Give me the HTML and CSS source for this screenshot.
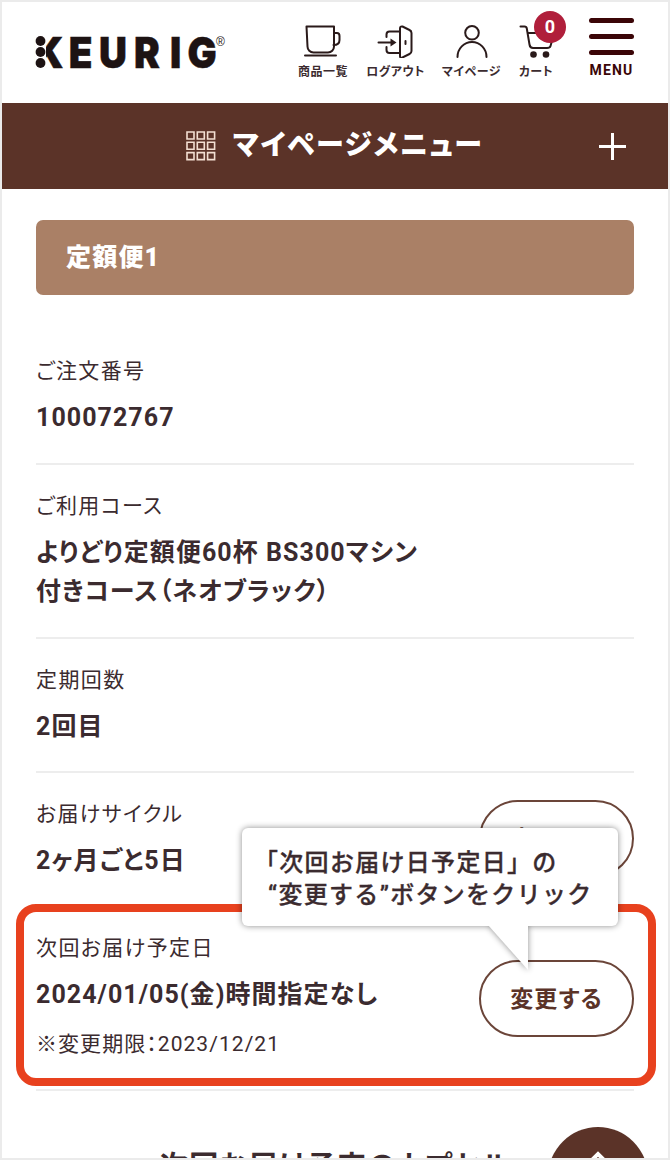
FILE: index.html
```html
<!DOCTYPE html>
<html lang="ja">
<head>
    <meta charset="UTF-8">
    <meta name="viewport" content="width=device-width, initial-scale=1.0">
    <title>KEURIG マイページ</title>
    <link rel="stylesheet" href="styles.css">
</head>
<body>
<div class="page">
    <header class="header">
        <svg class="logo" width="194" height="40" viewBox="0 0 194 40">
            <text class="logo-text" transform="scale(0.9 1)" x="-1 37.500 71 110 150 169.500" y="34">KEURIG</text>
            <rect x="0" y="0" width="11" height="36" fill="#fff"/>
            <circle cx="5.500" cy="7" r="4.900"/>
            <circle cx="5.500" cy="18" r="4.900"/>
            <circle cx="5.500" cy="29" r="4.900"/>
            <text class="logo-reg" x="181" y="11.500">®</text>
        </svg>
        <nav class="header-nav">
            <a class="nav-products">
                <svg width="38" height="34" viewBox="0 0 38 34">
                    <path d="M2.500 2.500H30v20a6 6 0 0 1-6 6H9.500a6 6 0 0 1-6-6z"/>
                    <path d="M30 9h3q2.500 0 2.500 3v4q0 5-6 5M1 31.500h31"/>
                </svg>
                <span>商品一覧</span>
            </a>
            <a class="nav-logout">
                <svg width="38" height="34" viewBox="0 0 38 34">
                    <path d="M23 7.500H12.500a3 3 0 0 0-3 3v2.500M9.500 23v3a3 3 0 0 0 3 3H23"/>
                    <path d="M23 4.500q0-2.500 2.500-2l7 3.500q2 1 2 3v18q0 2-2 3l-7 3.500q-2.500 1-2.500-1.500zM28.500 17v3"/>
                    <path d="M1.500 18.500h14"/>
                    <path class="fill" d="M13.500 14.500l6 4-6 4z"/>
                </svg>
                <span>ログアウト</span>
            </a>
            <a class="nav-mypage">
                <svg width="38" height="34" viewBox="0 0 38 34">
                    <circle cx="19" cy="8.800" r="6.800"/>
                    <path d="M4.500 33a14.500 15 0 0 1 29 0"/>
                </svg>
                <span>マイページ</span>
            </a>
            <a class="nav-cart">
                <svg width="38" height="34" viewBox="0 0 38 34">
                    <path d="M3.500 2.500h4q2 0 2.300 2l2.700 16q.5 3.500 3.500 3.500H30q3 0 3.500-2l2-7M10.500 9H35"/>
                    <circle class="fill" cx="16.500" cy="30.500" r="3.300"/>
                    <circle class="fill" cx="29" cy="30.500" r="3.300"/>
                </svg>
                <b class="badge">0</b>
                <span>カート</span>
            </a>
        </nav>
        <button class="menu-btn">
            <i></i><i></i><i></i>
            <span>MENU</span>
        </button>
    </header>

    <div class="mypage-menu">
        <svg class="grid-icon" width="30" height="30" viewBox="0 0 30 30">
            <path d="M1 1h7v7H1zM11.300 1h7v7h-7zM21.600 1h7v7h-7zM1 11.300h7v7H1zM11.300 11.300h7v7h-7zM21.600 11.300h7v7h-7zM1 21.600h7v7H1zM11.300 21.600h7v7h-7zM21.600 21.600h7v7h-7z"/>
        </svg>
        <span class="mypage-menu-title">マイページメニュー</span>
        <span class="plus"></span>
    </div>

    <main class="main">
        <h2 class="plan-title">定額便1</h2>
        <dl class="row row-number">
            <dt>ご注文番号</dt>
            <dd>100072767</dd>
        </dl>
        <dl class="row row-course">
            <dt>ご利用コース</dt>
            <dd>よりどり定額便60杯 BS300マシン<br>付きコース（ネオブラック）</dd>
        </dl>
        <dl class="row">
            <dt>定期回数</dt>
            <dd>2回目</dd>
        </dl>
        <div class="row row-action">
            <dl>
                <dt>お届けサイクル</dt>
                <dd>2ヶ月ごと5日</dd>
            </dl>
            <button class="change-btn">変更する</button>
        </div>
        <div class="row row-action row-next">
            <dl>
                <dt>次回お届け予定日</dt>
                <dd>2024/01/05(金)時間指定なし</dd>
                <dd class="note">※変更期限：2023/12/21</dd>
            </dl>
            <button class="change-btn">変更する</button>
            <div class="highlight"></div>
            <div class="callout">
                <p>「次回お届け日予定日」の<br><span class="callout-line2">“変更する”ボタンをクリック</span></p>
                <svg class="callout-tail" width="42" height="46" viewBox="0 0 42 46"><path d="M0 0h40v45z"/></svg>
            </div>
        </div>
        <h3 class="capsule-title">次回お届け予定のカプセル</h3>
    </main>

    <a class="page-top">
        <svg width="30" height="18" viewBox="0 0 30 18"><path d="M2 16L15 3l13 13"/></svg>
    </a>
</div>
</body>
</html>
```
FILE: styles.css
```css
* {
    box-sizing: border-box;
}
body {
    margin: 0;
    font-family: Roboto, "Noto Sans CJK JP", sans-serif;
    font-feature-settings: "palt";
    color: #3b2b2f;
    background: #fff;
}
.page {
    position: relative;
    width: 670px;
    height: 1160px;
    border: 2px solid #ebebeb;
    overflow: hidden;
}
h2, h3, p, dl, dd {
    margin: 0;
}
button {
    font: inherit;
    font-feature-settings: inherit;
    color: inherit;
    background: none;
    border: 0;
    padding: 0;
}

/* header */
.header {
    display: flex;
    align-items: flex-start;
    height: 101px;
    padding-left: 33px;
}
.logo {
    margin-top: 32px;
    fill: #1d1313;
    flex: none;
    overflow: visible;
}
.logo-text {
    font-family: Inter, sans-serif;
    font-weight: 900;
    font-size: 43px;
    stroke: #1d1313;
    stroke-width: 0.5;
}
.logo-reg {
    font-family: "Liberation Sans", sans-serif;
    font-size: 12px;
}
.header-nav {
    display: flex;
    margin-left: 66px;
    padding-top: 22px;
}
.header-nav a {
    position: relative;
    display: flex;
    flex-direction: column;
    align-items: center;
}
.header-nav svg {
    fill: none;
    stroke: #2a1a1a;
    stroke-width: 2;
    stroke-linecap: round;
    stroke-linejoin: round;
}
.header-nav .fill {
    fill: #2a1a1a;
    stroke: none;
}
.header-nav span {
    margin-top: 5px;
    font-size: 12px;
    line-height: 18px;
    font-weight: 700;
    letter-spacing: 0.5px;
    white-space: nowrap;
}
.nav-products {
    width: 56px;
}
.nav-logout {
    width: 89px;
}
.nav-mypage {
    width: 63px;
}
.nav-cart {
    width: 66px;
}
.badge {
    position: absolute;
    left: 31px;
    top: -13px;
    width: 32px;
    height: 32px;
    border-radius: 50%;
    background: #b01f3b;
    color: #fff;
    font-size: 18px;
    line-height: 31px;
    text-align: center;
}
.menu-btn {
    display: flex;
    flex-direction: column;
    align-items: center;
    width: 45px;
    margin: 16px 0 0 20px;
}
.menu-btn i {
    width: 45px;
    height: 5px;
    margin-bottom: 11px;
    border-radius: 3px;
    background: #3b0507;
}
.menu-btn span {
    margin-top: -5px;
    color: #3b0507;
    font-size: 14px;
    line-height: 18px;
    font-weight: 700;
    letter-spacing: 1.2px;
}

/* mypage menu bar */
.mypage-menu {
    display: flex;
    align-items: center;
    height: 86px;
    padding: 0 42px 0 184px;
    background: #5b3328;
    color: #fff;
}
.grid-icon {
    fill: none;
    stroke: #f3dfd2;
    stroke-width: 1.6;
}
.mypage-menu-title {
    margin: -6px auto 0 17px;
    font-size: 28px;
    font-weight: 900;
    letter-spacing: 1.6px;
}
.plus {
    width: 27px;
    height: 27px;
    background:
        linear-gradient(#fff, #fff) center / 27px 3px no-repeat,
        linear-gradient(#fff, #fff) center / 3px 27px no-repeat;
}

/* order detail */
.main {
    padding: 31px 34px 0;
}
.plan-title {
    height: 75px;
    margin-bottom: 41px;
    padding-left: 30px;
    border-radius: 7px;
    background: #aa8066;
    color: #fff;
    font-size: 25px;
    font-weight: 900;
    line-height: 75px;
    letter-spacing: 1.2px;
}
.row {
    position: relative;
    height: 134px;
    padding-top: 27px;
    border-bottom: 2px solid #ededed;
}
.row-number {
    height: 129px;
    padding-top: 21px;
}
.row-course {
    height: 174px;
}
dt {
    font-size: 21px;
    line-height: 29px;
    letter-spacing: 1.4px;
}
dd {
    margin-top: 12px;
    font-size: 25px;
    line-height: 39px;
    font-weight: 700;
    letter-spacing: 1.05px;
}
.row-action {
    display: flex;
    align-items: flex-start;
    justify-content: space-between;
}
.row-next {
    height: 184px;
}
.note {
    margin-top: 15px;
    font-size: 21px;
    line-height: 30px;
    font-weight: 400;
}
.change-btn {
    width: 155px;
    height: 77px;
    padding-bottom: 4px;
    border: 2px solid #6b4539;
    border-radius: 39px;
    color: #5b3328;
    font-size: 23px;
    font-weight: 700;
    letter-spacing: 1.2px;
}
.row-next .change-btn {
    margin-top: 26px;
}
.highlight {
    position: absolute;
    left: -20px;
    right: -22px;
    top: -3px;
    height: 182px;
    border: 8px solid #e8411e;
    border-radius: 20px;
}
.callout {
    position: absolute;
    left: 206px;
    top: -79px;
    width: 376px;
    height: 98px;
    padding: 19px 0 0 12px;
    border-radius: 6px;
    background: #fff;
    filter: drop-shadow(0 0 3px rgba(0, 0, 0, 0.45));
}
.callout p {
    font-size: 24px;
    line-height: 32px;
    font-weight: 500;
    font-feature-settings: normal;
    letter-spacing: 1.3px;
    white-space: nowrap;
    -webkit-text-stroke: 0.3px #3b2b2f;
}
.callout-line2 {
    padding-left: 14px;
}
.callout-tail {
    position: absolute;
    left: 246px;
    top: 97px;
    fill: #fff;
}
.capsule-title {
    margin-top: 55px;
    font-size: 29px;
    line-height: 42px;
    letter-spacing: 1px;
    text-align: center;
    white-space: nowrap;
}
.page-top {
    position: absolute;
    left: 546px;
    top: 1125px;
    width: 100px;
    height: 100px;
    border-radius: 50%;
    background: #5b3328;
    text-align: center;
}
.page-top svg {
    margin-top: 24px;
    fill: none;
    stroke: #fff;
    stroke-width: 4;
}
```
